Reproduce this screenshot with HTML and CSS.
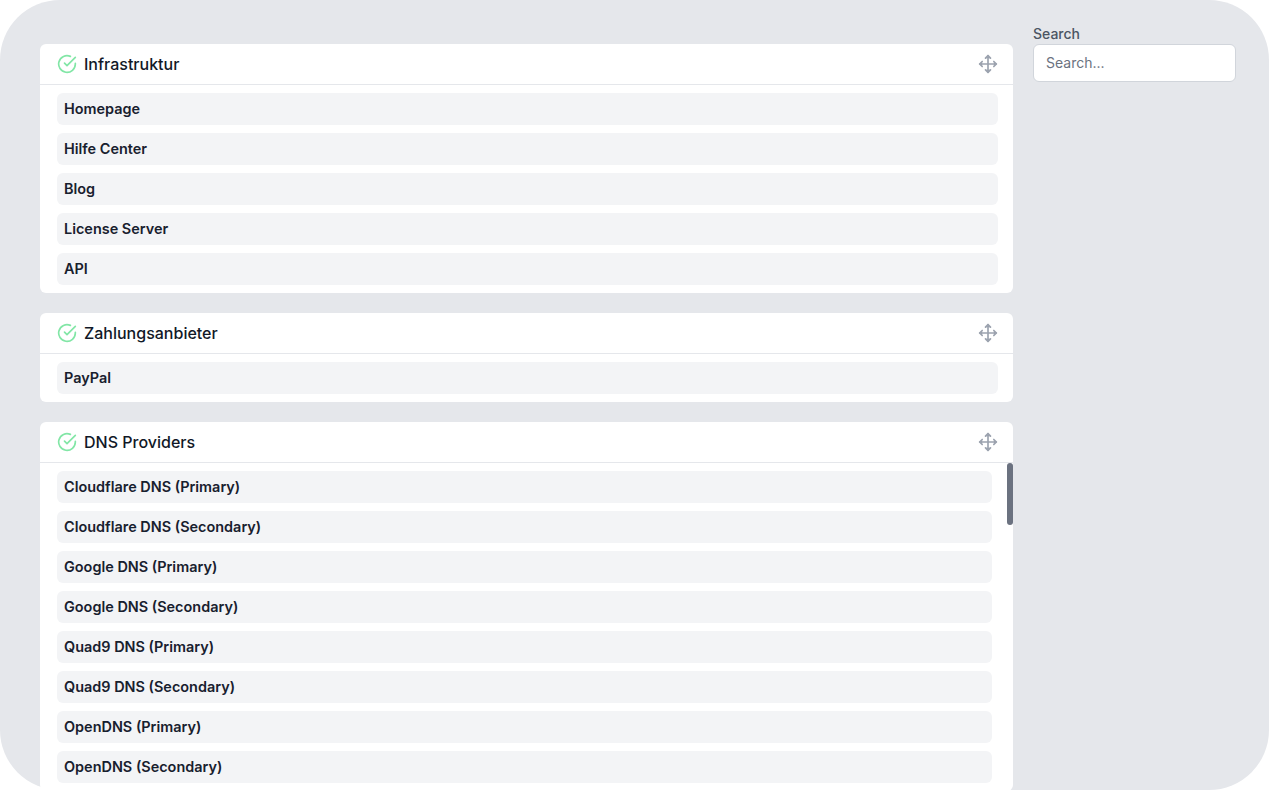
FILE: index.html
```html
<!DOCTYPE html>
<html lang="de">
<head>
  <meta charset="UTF-8">
  <meta name="viewport" content="width=device-width, initial-scale=1.0">
  <title>Status</title>
  <link rel="stylesheet" href="styles.css">
</head>
<body>
  <div class="page">
    <main class="groups">

      <section class="group">
        <header class="group-head">
          <svg class="icon-ok" viewBox="0 0 24 24"><path d="M22 11.08V12a10 10 0 1 1-5.93-9.14"/><polyline points="22 4 12 14.01 9 11.01"/></svg>
          <h2>Infrastruktur</h2>
          <svg class="icon-move" viewBox="0 0 24 24"><polyline points="5 9 2 12 5 15"/><polyline points="9 5 12 2 15 5"/><polyline points="15 19 12 22 9 19"/><polyline points="19 9 22 12 19 15"/><line x1="2" y1="12" x2="22" y2="12"/><line x1="12" y1="2" x2="12" y2="22"/></svg>
        </header>
        <ul class="monitors">
          <li>Homepage</li>
          <li>Hilfe Center</li>
          <li>Blog</li>
          <li>License Server</li>
          <li>API</li>
        </ul>
      </section>

      <section class="group">
        <header class="group-head">
          <svg class="icon-ok" viewBox="0 0 24 24"><path d="M22 11.08V12a10 10 0 1 1-5.93-9.14"/><polyline points="22 4 12 14.01 9 11.01"/></svg>
          <h2>Zahlungsanbieter</h2>
          <svg class="icon-move" viewBox="0 0 24 24"><polyline points="5 9 2 12 5 15"/><polyline points="9 5 12 2 15 5"/><polyline points="15 19 12 22 9 19"/><polyline points="19 9 22 12 19 15"/><line x1="2" y1="12" x2="22" y2="12"/><line x1="12" y1="2" x2="12" y2="22"/></svg>
        </header>
        <ul class="monitors">
          <li>PayPal</li>
        </ul>
      </section>

      <section class="group group-scroll">
        <header class="group-head">
          <svg class="icon-ok" viewBox="0 0 24 24"><path d="M22 11.08V12a10 10 0 1 1-5.93-9.14"/><polyline points="22 4 12 14.01 9 11.01"/></svg>
          <h2>DNS Providers</h2>
          <svg class="icon-move" viewBox="0 0 24 24"><polyline points="5 9 2 12 5 15"/><polyline points="9 5 12 2 15 5"/><polyline points="15 19 12 22 9 19"/><polyline points="19 9 22 12 19 15"/><line x1="2" y1="12" x2="22" y2="12"/><line x1="12" y1="2" x2="12" y2="22"/></svg>
        </header>
        <div class="scroll-wrap">
          <ul class="monitors">
            <li>Cloudflare DNS (Primary)</li>
            <li>Cloudflare DNS (Secondary)</li>
            <li>Google DNS (Primary)</li>
            <li>Google DNS (Secondary)</li>
            <li>Quad9 DNS (Primary)</li>
            <li>Quad9 DNS (Secondary)</li>
            <li>OpenDNS (Primary)</li>
            <li>OpenDNS (Secondary)</li>
          </ul>
          <div class="scroll-thumb"></div>
        </div>
      </section>

    </main>

    <aside class="side">
      <label class="search-label" for="search">Search</label>
      <input class="search-input" id="search" type="text" placeholder="Search...">
    </aside>
  </div>
</body>
</html>
```

FILE: styles.css
```css
* {
  box-sizing: border-box;
}

html, body {
  height: 100%;
}

body {
  margin: 0;
  background: #fff;
  color: #1f2937;
  font-family: 'Inter', sans-serif;
  overflow: hidden;
}

.page {
  display: flex;
  align-items: flex-start;
  gap: 20px;
  height: 790px;
  padding: 24px 33px 0 40px;
  background: #e5e7eb;
  border-radius: 60px;
}

.groups {
  flex: 0 0 973px;
  padding-top: 20px;
}

.group {
  background: #fff;
  border-radius: 6px;
  margin-bottom: 20px;
}

.group-head {
  display: flex;
  align-items: center;
  height: 41px;
  padding: 0 15.5px 0 16.5px;
  border-bottom: 1px solid #e5e7eb;
}

.group-head h2 {
  flex: 1;
  margin: 0 0 0 7.5px;
  font-size: 16px;
  font-weight: 500;
  color: #111827;
}

.icon-ok, .icon-move {
  width: 20px;
  height: 20px;
  stroke-linecap: round;
  stroke-linejoin: round;
  stroke-width: 2;
}

.icon-ok {
  fill: none;
  stroke: #82e6a6;
}

.icon-move {
  fill: #9ca3af;
  stroke: #9ca3af;
}

.monitors {
  list-style: none;
  margin: 0;
  padding: 8px 15px 8px 17px;
  display: flex;
  flex-direction: column;
  gap: 8px;
}

.monitors li {
  height: 32px;
  padding: 0 7px 2px;
  display: flex;
  align-items: center;
  background: #f3f4f6;
  border-radius: 6px;
  font-size: 14.45px;
  font-weight: 600;
  color: #18202e;
}

.group-scroll .monitors {
  padding-right: 21px;
}

.scroll-wrap {
  position: relative;
}

.scroll-thumb {
  position: absolute;
  top: 0;
  right: 0;
  width: 6px;
  height: 62px;
  background: #6b7280;
  border-radius: 3px;
}

.side {
  flex: 0 0 203px;
  display: flex;
  flex-direction: column;
}

.search-label {
  font-size: 14px;
  font-weight: 500;
  line-height: 20px;
  color: #4b5563;
}

.search-input {
  width: 100%;
  height: 38px;
  padding: 0 12px 2px;
  border: 1px solid #d1d5db;
  border-radius: 6px;
  background: #fff;
  font-family: inherit;
  font-size: 14px;
  color: #1f2937;
}

.search-input::placeholder {
  color: #6b7280;
}
```
